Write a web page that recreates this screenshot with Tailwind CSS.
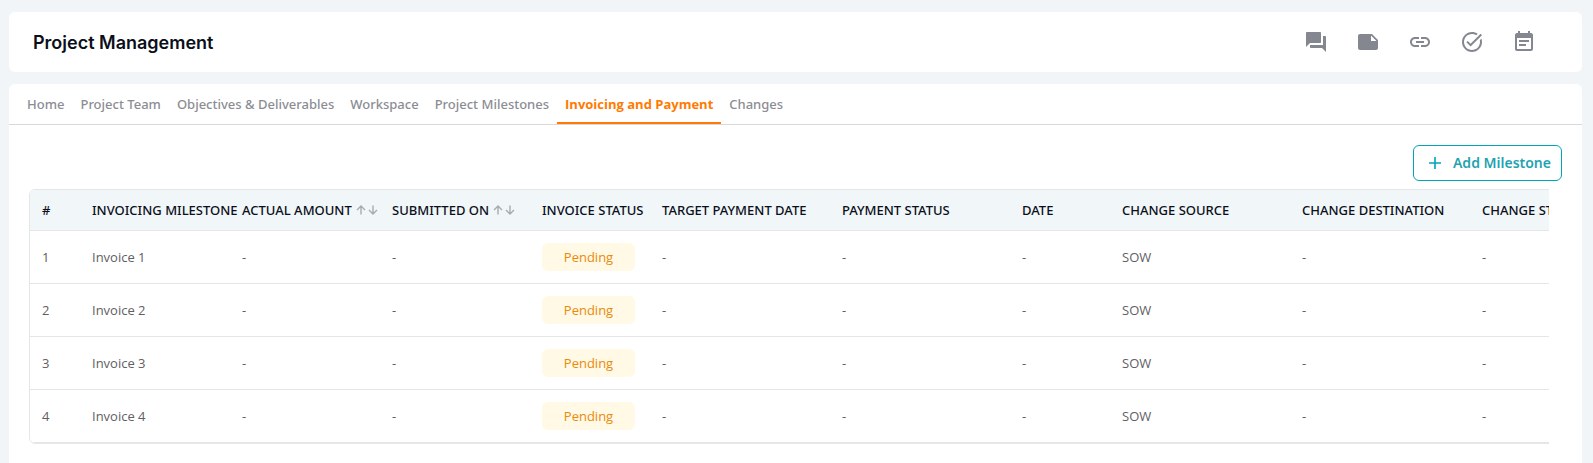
<!DOCTYPE html>
<html lang="en">
<head>
<meta charset="utf-8">
<meta name="viewport" content="width=device-width, initial-scale=1">
<title>Project Management</title>
<script src="https://cdn.jsdelivr.net/npm/@tailwindcss/browser@4"></script>
</head>
<body class="min-h-screen flex flex-col gap-3 bg-[#f1f5f8] pt-3 pl-[9px] pr-[11px] font-['Open_Sans','Noto_Sans',sans-serif] text-[13px] leading-5 text-[#5f6063]">
  <header class="flex h-[60px] items-center justify-between rounded-md bg-white pl-6 pr-[46px]">
    <h1 class="pt-0.5 font-['Inter',sans-serif] text-lg font-semibold text-[#0b0f1a]">Project Management</h1>
    <div class="flex gap-7 text-[#84878f]">
      <button type="button" aria-label="Discussion"><svg class="size-6 fill-current" viewBox="0 0 24 24"><path d="M21 6h-2v9H6v2c0 .55.45 1 1 1h11l4 4V7c0-.55-.45-1-1-1zm-4 6V3c0-.55-.45-1-1-1H3c-.55 0-1 .45-1 1v14l4-4h10c.55 0 1-.45 1-1z"/></svg></button>
      <button type="button" aria-label="Notes"><svg class="size-6 fill-current" viewBox="0 0 24 24"><path d="M22 10l-6-6H4c-1.100 0-2 .9-2 2v12.010c0 1.100.9 1.990 2 1.990l16-.01c1.100 0 2-.89 2-1.990v-8zm-7-4.500l5.500 5.500H15V5.500z"/></svg></button>
      <button type="button" aria-label="Links"><svg class="size-6 fill-current" viewBox="0 0 24 24"><path d="M3.900 12c0-1.710 1.390-3.100 3.100-3.100h4V7H7c-2.760 0-5 2.240-5 5s2.240 5 5 5h4v-1.900H7c-1.710 0-3.100-1.390-3.100-3.100zM8 13h8v-2H8v2zm9-6h-4v1.900h4c1.710 0 3.100 1.390 3.100 3.100s-1.390 3.100-3.100 3.100h-4V17h4c2.760 0 5-2.240 5-5s-2.240-5-5-5z"/></svg></button>
      <button type="button" aria-label="Tasks"><svg class="size-6 fill-current" viewBox="0 0 24 24"><path d="M22 5.180L10.590 16.600l-4.240-4.240 1.410-1.410 2.830 2.830 10-10L22 5.180zm-2.210 5.040c.13.57.21 1.170.21 1.780 0 4.420-3.580 8-8 8s-8-3.580-8-8 3.580-8 8-8c1.580 0 3.040.46 4.280 1.250l1.440-1.440C16.100 2.670 14.130 2 12 2 6.480 2 2 6.480 2 12s4.480 10 10 10 10-4.480 10-10c0-1.190-.22-2.330-.6-3.390l-1.610 1.610z"/></svg></button>
      <button type="button" aria-label="Calendar"><svg class="size-6 fill-current" viewBox="0 0 24 24"><path d="M17 10H7v2h10v-2zm2-7h-1V1h-2v2H8V1H6v2H5c-1.110 0-1.990.9-1.990 2L3 19c0 1.100.89 2 2 2h14c1.100 0 2-.9 2-2V5c0-1.100-.9-2-2-2zm0 16H5V8h14v11zm-5-5H7v2h7v-2z"/></svg></button>
    </div>
  </header>

  <main class="grow rounded-t-md bg-white">
    <nav class="flex h-[41px] border-b border-[#d9d9d9] pl-[10px] font-['Noto_Sans',sans-serif] font-medium text-[#8c8d94]">
      <a href="#" class="px-2 py-[10px]">Home</a>
      <a href="#" class="px-2 py-[10px]">Project Team</a>
      <a href="#" class="px-2 py-[10px]">Objectives &amp; Deliverables</a>
      <a href="#" class="px-2 py-[10px]">Workspace</a>
      <a href="#" class="px-2 py-[10px]">Project Milestones</a>
      <a href="#" aria-current="page" class="border-b-2 border-[#ff7a00] px-2 pt-[10px] font-['Open_Sans',sans-serif] font-bold text-[#ff7a00]">Invoicing and Payment</a>
      <a href="#" class="px-2 py-[10px]">Changes</a>
    </nav>

    <div class="flex justify-end pt-5 pr-5">
      <button type="button" class="flex h-9 items-center gap-3 rounded-md border border-[#00a6b7] pr-[10px] pl-[15px] font-['Noto_Sans',sans-serif] text-sm font-semibold text-[#1fa3b2]">
        <svg class="size-3 fill-none stroke-[#00a6b7] stroke-[1.6]" viewBox="0 0 12 12"><path d="M6 0v12M0 6h12"/></svg>
        Add Milestone
      </button>
    </div>

    <div class="mt-2 mr-[33px] ml-5 overflow-x-auto [scrollbar-width:none]">
      <div class="w-[1622px] overflow-hidden rounded-md border border-[#e5e6e8]">
        <table class="w-full table-fixed border-separate border-spacing-0 text-left whitespace-nowrap [&_td]:h-[53px] [&_td]:border-b [&_td]:border-[#e5e6e8] [&_td]:p-0 [&_td]:pl-3 [&_th]:h-[41px] [&_th]:border-b [&_th]:border-[#e5e6e8] [&_th]:p-0 [&_th]:pl-3 [&_th]:font-medium">
          <colgroup>
            <col class="w-[50px]"><col class="w-[150px]"><col class="w-[150px]"><col class="w-[150px]"><col class="w-[120px]"><col class="w-[180px]"><col class="w-[180px]"><col class="w-[100px]"><col class="w-[180px]"><col class="w-[180px]"><col class="w-[180px]">
          </colgroup>
          <thead class="bg-[#f1f6f9] font-['Noto_Sans',sans-serif] text-[#0b0f1a]">
            <tr>
              <th>#</th>
              <th>INVOICING MILESTONE</th>
              <th><div class="flex items-center gap-1">ACTUAL AMOUNT
                <button type="button" aria-label="Sort by actual amount"><svg class="h-[10px] w-[22px] fill-none stroke-[#a9abae] stroke-[1.4]" viewBox="0 0 22 10"><path d="M5 9.500V1.500M1 5L5 1l4 4M17 .500v8M13 5l4 4 4-4"/></svg></button></div></th>
              <th><div class="flex items-center gap-1">SUBMITTED ON
                <button type="button" aria-label="Sort by submitted on"><svg class="h-[10px] w-[22px] fill-none stroke-[#a9abae] stroke-[1.4]" viewBox="0 0 22 10"><path d="M5 9.500V1.500M1 5L5 1l4 4M17 .500v8M13 5l4 4 4-4"/></svg></button></div></th>
              <th>INVOICE STATUS</th>
              <th>TARGET PAYMENT DATE</th>
              <th>PAYMENT STATUS</th>
              <th>DATE</th>
              <th>CHANGE SOURCE</th>
              <th>CHANGE DESTINATION</th>
              <th>CHANGE STATUS</th>
            </tr>
          </thead>
          <tbody>
            <tr><td>1</td><td>Invoice 1</td><td>-</td><td>-</td><td><span class="flex h-7 w-[93px] items-center justify-center rounded-md bg-[#fff9e5] text-[#ea8a0c]">Pending</span></td><td>-</td><td>-</td><td>-</td><td>SOW</td><td>-</td><td>-</td></tr>
            <tr><td>2</td><td>Invoice 2</td><td>-</td><td>-</td><td><span class="flex h-7 w-[93px] items-center justify-center rounded-md bg-[#fff9e5] text-[#ea8a0c]">Pending</span></td><td>-</td><td>-</td><td>-</td><td>SOW</td><td>-</td><td>-</td></tr>
            <tr><td>3</td><td>Invoice 3</td><td>-</td><td>-</td><td><span class="flex h-7 w-[93px] items-center justify-center rounded-md bg-[#fff9e5] text-[#ea8a0c]">Pending</span></td><td>-</td><td>-</td><td>-</td><td>SOW</td><td>-</td><td>-</td></tr>
            <tr><td>4</td><td>Invoice 4</td><td>-</td><td>-</td><td><span class="flex h-7 w-[93px] items-center justify-center rounded-md bg-[#fff9e5] text-[#ea8a0c]">Pending</span></td><td>-</td><td>-</td><td>-</td><td>SOW</td><td>-</td><td>-</td></tr>
          </tbody>
        </table>
      </div>
    </div>
  </main>
</body>
</html>
